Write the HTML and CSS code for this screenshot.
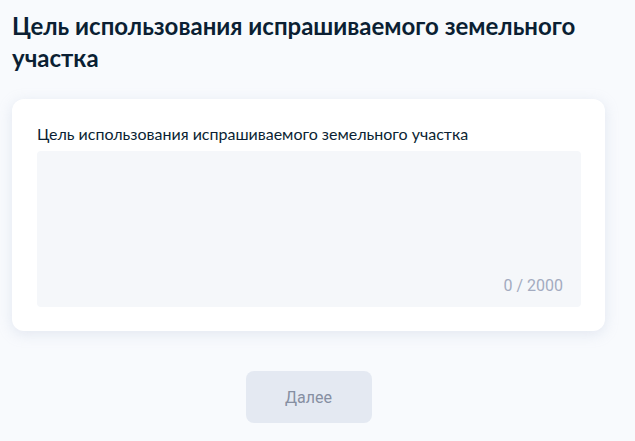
FILE: index.html
```html
<!DOCTYPE html>
<html lang="ru">
<head>
  <meta charset="UTF-8">
  <meta name="viewport" content="width=device-width, initial-scale=1.0">
  <title>Цель использования</title>
  <link rel="stylesheet" href="styles.css">
</head>
<body>
  <div class="page">
    <h1 class="title">Цель использования испрашиваемого земельного участка</h1>

    <div class="card">
      <label class="field-label" for="purpose">Цель использования испрашиваемого земельного участка</label>
      <div class="field">
        <textarea id="purpose" class="field-input" maxlength="2000"></textarea>
        <span class="counter">0 / 2000</span>
      </div>
    </div>

    <div class="actions">
      <button class="btn-next" disabled>Далее</button>
    </div>
  </div>
</body>
</html>
```

FILE: styles.css
```css
* {
  box-sizing: border-box;
}

body {
  margin: 0;
  padding: 0;
  background: #f8fafd;
  font-family: 'Lato', 'Noto Sans', sans-serif;
  color: #0b1f33;
}

.page {
  padding: 10px 30px 0 12px;
}

.title {
  margin: 0 0 25px;
  font-size: 24px;
  line-height: 32px;
  font-weight: 700;
  max-width: 580px;
}

.card {
  background: #ffffff;
  border-radius: 12px;
  padding: 25px 24px 24px 25px;
  box-shadow: 0 3px 14px rgba(170, 182, 210, 0.28);
}

.field-label {
  display: block;
  font-size: 16px;
  line-height: 20px;
  margin-bottom: 7px;
}

.field {
  position: relative;
}

.field-input {
  display: block;
  width: 100%;
  height: 156px;
  border: none;
  border-radius: 4px;
  background: #f5f7fa;
  resize: none;
  padding: 12px 16px;
  font-family: inherit;
  font-size: 16px;
  outline: none;
}

.counter {
  position: absolute;
  right: 18px;
  bottom: 12px;
  font-family: 'Roboto', 'Inter', sans-serif;
  font-size: 16px;
  line-height: 19px;
  color: #a3abc0;
}

.actions {
  display: flex;
  justify-content: center;
  padding-top: 40px;
}

.btn-next {
  width: 126px;
  height: 52px;
  border: none;
  border-radius: 8px;
  background: #e4e9f2;
  color: #868fa2;
  font-family: 'Roboto', 'Inter', sans-serif;
  font-size: 16px;
}
```
